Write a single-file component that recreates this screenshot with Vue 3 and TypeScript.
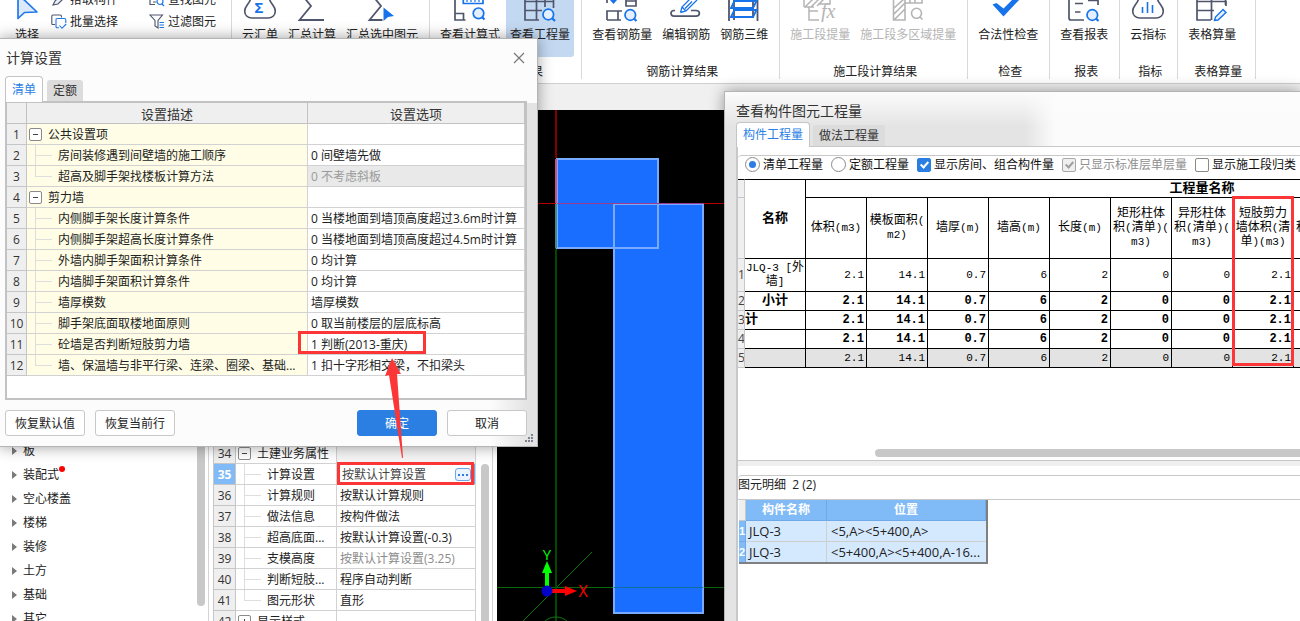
<script setup lang="ts">
import { ref } from 'vue'

interface SettingRow { no: number; name: string; value: string; group?: boolean; last?: boolean; disabled?: boolean }
interface PropertyRow { no: number; name: string; value: string; group?: boolean; last?: boolean; muted?: boolean; open?: boolean }

const settings: SettingRow[] = [
  { no: 1, name: '公共设置项', value: '', group: true },
  { no: 2, name: '房间装修遇到间壁墙的施工顺序', value: '0 间壁墙先做' },
  { no: 3, name: '超高及脚手架找楼板计算方法', value: '0 不考虑斜板', last: true, disabled: true },
  { no: 4, name: '剪力墙', value: '', group: true },
  { no: 5, name: '内侧脚手架长度计算条件', value: '0 当楼地面到墙顶高度超过3.6m时计算' },
  { no: 6, name: '内侧脚手架超高长度计算条件', value: '0 当楼地面到墙顶高度超过4.5m时计算' },
  { no: 7, name: '外墙内脚手架面积计算条件', value: '0 均计算' },
  { no: 8, name: '内墙脚手架面积计算条件', value: '0 均计算' },
  { no: 9, name: '墙厚模数', value: '墙厚模数' },
  { no: 10, name: '脚手架底面取楼地面原则', value: '0 取当前楼层的层底标高' },
  { no: 11, name: '砼墙是否判断短肢剪力墙', value: '1 判断(2013-重庆)' },
  { no: 12, name: '墙、保温墙与非平行梁、连梁、圈梁、基础...', value: '1 扣十字形相交梁，不扣梁头', last: true },
]

const properties: PropertyRow[] = [
  { no: 34, name: '土建业务属性', value: '', group: true, open: true },
  { no: 35, name: '计算设置', value: '按默认计算设置' },
  { no: 36, name: '计算规则', value: '按默认计算规则' },
  { no: 37, name: '做法信息', value: '按构件做法' },
  { no: 38, name: '超高底面...', value: '按默认计算设置(-0.3)' },
  { no: 39, name: '支模高度', value: '按默认计算设置(3.25)', muted: true },
  { no: 40, name: '判断短肢...', value: '程序自动判断' },
  { no: 41, name: '图元形状', value: '直形', last: true },
  { no: 42, name: '显示样式', value: '', group: true },
]
const selectedProperty = ref(35)
const editedValue = ref('按默认计算设置')

const categories = ['板', '装配式', '空心楼盖', '楼梯', '装修', '土方', '基础', '其它']

const quantityColumns: string[][] = [
  ['体积(m3)'],
  ['模板面积(', 'm2)'],
  ['墙厚(m)'],
  ['墙高(m)'],
  ['长度(m)'],
  ['矩形柱体', '积(清单)(', 'm3)'],
  ['异形柱体', '积(清单)(', 'm3)'],
  ['短肢剪力', '墙体积(清', '单)(m3)'],
  ['圆形柱体', '积(清单)(', 'm3)'],
  [], [], [], [],
]
const amounts = ['2.1', '14.1', '0.7', '6', '2', '0', '0', '2.1', '', '', '', '', '']
const quantityRows = [
  { no: 1, name: ['JLQ-3 [外', '墙]'], kind: 'item' },
  { no: 2, name: ['小计'], kind: 'sum' },
  { no: 3, name: ['计'], kind: 'sum start' },
  { no: 4, name: [], kind: 'sum' },
  { no: 5, name: [], kind: 'total' },
]
const parts = (line: string): string[] => line.match(/[\x00-\x7f]+|[^\x00-\x7f]+/g) ?? []
const isLatin = (part: string): boolean => part.charCodeAt(0) < 128

const quota = ref('list')
const showRooms = ref(true)
const standardOnly = ref(true)
const showSections = ref(false)

const elements = [
  { no: 1, name: 'JLQ-3', place: '<5,A><5+400,A>' },
  { no: 2, name: 'JLQ-3', place: '<5+400,A><5+400,A-16...' },
]
</script>

<template>
  <div class="app">
    <header class="ribbon">
      <section class="group first">
        <div class="tools">
          <button class="tool">
            <svg class="ico" width="40" height="22" viewBox="0 0 40 22"><path d="M11 -6 V18.5 L17.5 12.5 L30 12 Z" fill="#dbe9fb" stroke="#2178e8" stroke-width="1.7" stroke-linejoin="round" /></svg>
            <span>选择</span>
          </button>
          <div class="stack">
            <button class="mini">
              <svg width="16" height="16" viewBox="0 0 16 16"><path d="M2 13 L4 9 L11 2 L14 5 L7 12 Z" fill="#e8f2ff" stroke="#4f566b" stroke-width="1.2" /></svg>
              拾取构件
            </button>
            <button class="mini">
              <svg width="16" height="16" viewBox="0 0 16 16" fill="none" stroke="#4f566b" stroke-width="1.1"><path d="M4 10.5 H1.5 Q.8 10.5 .8 9.5 V2 Q.8 1 2 1 H9 Q10.5 1 10.5 2.5 V3.5" /><g stroke="#2178e8"><path d="M8 13.8 H6 Q5 13.8 5 12.5 V5.5 Q5 4.5 6 4.5 H13.5 Q14.8 4.5 14.8 6 V9" /><path d="M8.5 11.5 L11 14.3 L15.2 10" /></g></svg>
              批量选择
            </button>
          </div>
          <div class="stack">
            <button class="mini">
              <svg width="16" height="16" viewBox="0 0 16 16" fill="none" stroke="#4f566b" stroke-width="1.2"><path d="M1 1 V12.5 H6 M4 10 H7 M1 3 H6" /><circle cx="11" cy="9.5" r="3" stroke="#2178e8" /><path d="M13 12 L15 14" stroke="#2178e8" /></svg>
              查找图元
            </button>
            <button class="mini">
              <svg width="16" height="16" viewBox="0 0 16 16" fill="none" stroke="#4f566b" stroke-width="1.1"><path d="M1 1 H13.5 L9 6.5 V14 L6 12 V6.5 Z" /><path d="M10.5 8.5 H15 M10.5 11 H15 M10.5 13.5 H15" stroke="#2178e8" /></svg>
              过滤图元
            </button>
          </div>
        </div>
      </section>
      <section class="group">
        <div class="tools">
          <button class="tool">
            <svg class="ico" width="40" height="22" viewBox="0 0 40 22"><path d="M10.5 -1 C9.5 4 4.7 6 4.7 11 C4.7 15.5 8 18 12 18 H28 C32 18 35.3 15.5 35.3 11 C35.3 6 30.5 4 29.5 -1" fill="none" stroke="#4f566b" stroke-width="1.7" /><text x="19" y="12.5" text-anchor="middle" font-size="15" font-weight="700" fill="#1673ea">Σ</text></svg>
            <span>云汇单</span>
          </button>
          <button class="tool">
            <svg class="ico" width="40" height="22" viewBox="0 0 40 22"><path d="M12.5 -2 L19 6 L7.5 20 H32" fill="none" stroke="#4f566b" stroke-width="1.8" /></svg>
            <span>汇总计算</span>
          </button>
          <button class="tool">
            <svg class="ico" width="40" height="22" viewBox="0 0 40 22"><path d="M12.5 -2 L19 6 L7.5 20 H20.5" fill="none" stroke="#4f566b" stroke-width="1.8" /><path d="M21.5 7.5 V21 L26 17 L32 16 Z" fill="#1673ea" /></svg>
            <span>汇总选中图元</span>
          </button>
        </div>
      </section>
      <section class="group">
        <div class="tools">
          <button class="tool">
            <svg class="ico" width="40" height="22" viewBox="0 0 40 22" fill="none" stroke="#4f566b" stroke-width="1.7"><path d="M5 -1 V20 H15.5 M5 13.5 H13.5 V20" /><g stroke="#1673ea"><path d="M13.3 -1 V3.5 H33 V-1" /><path d="M17 0 V2 M21 0 V2 M25 0 V2 M29 0 V2" stroke-width="1.2" /><circle cx="28.5" cy="13.3" r="5.3" fill="#e4efff" /><path d="M32 17 L34.5 19.5" stroke-width="2.2" /></g></svg>
            <span>查看计算式</span>
          </button>
          <button class="tool selected">
            <svg class="ico" width="40" height="22" viewBox="0 0 40 22" fill="none" stroke="#4f566b" stroke-width="1.7"><path d="M5 -1 V20 H19 M5 1.5 H34 M5 10.5 H22 M16.5 -1 V20 M25 -1 V7 M33.5 -1 V8" /><g stroke="#1673ea"><circle cx="28.3" cy="14.5" r="5.3" fill="#e4efff" /><path d="M32 18 L35 21" stroke-width="2.2" /></g></svg>
            <span>查看工程量</span>
          </button>
        </div>
        <span class="caption">土建计算结果</span>
      </section>
      <section class="group">
        <div class="tools">
          <button class="tool">
            <svg class="ico" width="40" height="22" viewBox="0 0 40 22" fill="none" stroke="#4f566b" stroke-width="1.7"><path d="M5 -1 V3 M5 20 V11 H20 M5 20 H19 M16 11 V20 M24 -1 V6 H34 V-1 M24 1 H34" /><path d="M8 0 L11.5 4 L15 0 Z" fill="#1673ea" stroke="none" /><g stroke="#1673ea"><circle cx="28.3" cy="15" r="5.3" fill="#e4efff" /><path d="M32 18.5 L34.5 21" stroke-width="2.2" /></g></svg>
            <span>查看钢筋量</span>
          </button>
          <button class="tool">
            <svg class="ico" width="40" height="22" viewBox="0 0 40 22" fill="none" stroke="#4f566b" stroke-width="1.7"><path d="M9 10.5 H8 C4 10.5 4 16.2 8 16.2 H30 C34.5 16.2 34.5 10.5 30 10.5 H25" /><path d="M14.5 12.5 L16 7 L24 -1 M14.5 12.5 L20 11 L31 0 M19 8.5 L26 1.5 M16 7 L20 11" stroke="#1673ea" stroke-width="1.3" /></svg>
            <span>编辑钢筋</span>
          </button>
          <button class="tool">
            <svg class="ico" width="40" height="22" viewBox="0 0 40 22" fill="none" stroke="#4f566b" stroke-width="1.8"><path d="M5 -1 V21 M33.5 -1 V21 M10 -1 V20 M29 -1 V18" /><path d="M7 8 L10.5 1 H32.5 L29 8 Z M7 17 L10.5 10 H32.5 L29 17 Z" stroke="#1673ea" /></svg>
            <span>钢筋三维</span>
          </button>
        </div>
        <span class="caption">钢筋计算结果</span>
      </section>
      <section class="group">
        <div class="tools">
          <button class="tool" disabled>
            <svg class="ico" width="40" height="22" viewBox="0 0 40 22" fill="none" stroke="#b5b5b5" stroke-width="1.5"><path d="M4 7 H14 M9 7 V20 H19 M9 11 H18 M4 7 V-1 M5 7 L13 -1 M11 7 L19 -1 M17 6 L24 -1 M18 4 H30 V-1" /><text x="21" y="18" font-size="20" font-style="italic" fill="#b5b5b5" stroke="none" class="fx">fx</text></svg>
            <span>施工段提量</span>
          </button>
          <button class="tool" disabled>
            <svg class="ico" width="40" height="22" viewBox="0 0 40 22" fill="none" stroke="#b5b5b5" stroke-width="1.6"><path d="M5.5 -1 V20 H17 V-1 M6 8 L16 -1 M6 14 L17 3 M6 20 L17 9 M17 3 H34 V-1 M22 -1 V3 M27 -1 V3" /><circle cx="28.5" cy="13.3" r="5" /><path d="M32 17 L34.5 19.5" /></svg>
            <span>施工段多区域提量</span>
          </button>
        </div>
        <span class="caption">施工段计算结果</span>
      </section>
      <section class="group">
        <div class="tools">
          <button class="tool">
            <svg class="ico" width="40" height="22" viewBox="0 0 40 22"><path d="M4.5 4.5 L8.5 3 L15.5 8.5 L25 -1 H32 L15.5 16.5 Z" fill="#1673ea" /></svg>
            <span>合法性检查</span>
          </button>
        </div>
        <span class="caption">检查</span>
      </section>
      <section class="group">
        <div class="tools">
          <button class="tool">
            <svg class="ico" width="40" height="22" viewBox="0 0 40 22" fill="none" stroke="#4f566b" stroke-width="1.7"><path d="M5 -1 V18 Q5 20 7 20 H20 M11 3.5 H19 M11 12 H16.5 M24 .5 H34 V5" /><g stroke="#1673ea"><circle cx="28.3" cy="15" r="5.3" fill="#e4efff" /><path d="M32 18.5 L34.5 21" stroke-width="2.2" /></g></svg>
            <span>查看报表</span>
          </button>
        </div>
        <span class="caption">报表</span>
      </section>
      <section class="group">
        <div class="tools">
          <button class="tool">
            <svg class="ico" width="40" height="22" viewBox="0 0 40 22"><path d="M10.5 -1 C9.5 4 4.7 6 4.7 11 C4.7 15.5 8 18 12 18 H28 C32 18 35.3 15.5 35.3 11 C35.3 6 30.5 4 29.5 -1" fill="none" stroke="#4f566b" stroke-width="1.7" /><path d="M14.5 7 V13 M19.5 2 V13 M24.5 5 V13" stroke="#1673ea" stroke-width="1.6" /></svg>
            <span>云指标</span>
          </button>
        </div>
        <span class="caption">指标</span>
      </section>
      <section class="group last">
        <div class="tools">
          <button class="tool">
            <svg class="ico" width="40" height="22" viewBox="0 0 40 22" fill="none" stroke="#4f566b" stroke-width="1.7"><path d="M5 -1 V20 H19 M5 1.5 H34 V6 M5 10.5 H22 M19.5 -1 V20 M33.5 -1 V5" /><path d="M22.5 20.5 L23.5 17 L31 9.5 L34 12.5 L26 20 Z" fill="#e4efff" stroke="#1673ea" stroke-width="1.4" /></svg>
            <span>表格算量</span>
          </button>
        </div>
        <span class="caption">表格算量</span>
      </section>
    </header>
    <div class="strip"></div>

    <main class="body">
      <nav class="tree">
        <ul>
          <li v-for="item in categories" :key="item">
            <a href="#"><svg width="5" height="8" viewBox="0 0 5 8"><path d="M0 0 L5 4 L0 8 Z" fill="#7a7a7a" /></svg><span class="cat">{{ item }}<i v-if="item === '装配式'" class="dot"></i></span></a>
          </li>
        </ul>
        <div class="thumb"></div>
      </nav>

      <section class="props">
        <div class="pbox">
          <table class="grid ptable">
            <colgroup><col class="c-no" /><col class="c-name" /><col /></colgroup>
            <tbody>
              <tr v-for="row in properties" :key="row.no" :class="{ active: row.no === selectedProperty, muted: row.muted, open: row.open }">
                <th scope="row">{{ row.no }}</th>
                <td class="tname" :class="{ kid: !row.group, last: row.last }">
                  <button v-if="row.group" class="toggle" :class="{ closed: !row.open }" :aria-label="row.name"></button>{{ row.name }}
                </td>
                <td class="tval">
                  <div v-if="row.no === selectedProperty" class="editor">
                    <input v-model="editedValue" type="text" :aria-label="row.name" />
                    <button class="more" aria-label="更多"><i></i><i></i><i></i></button>
                  </div>
                  <template v-else>{{ row.value }}</template>
                </td>
              </tr>
            </tbody>
          </table>
        </div>
        <div class="thumb"></div>
      </section>

      <section class="canvas">
        <svg width="803" height="511" viewBox="497 110 803 511" fill="none">
          <path d="M497 587.5 H1300" stroke="#076a07" />
          <path d="M592 552 L520 624" stroke="#0a780a" />
          <path d="M556 110 V158" stroke="#800000" stroke-width="2" />
          <path d="M556 248 V621" stroke="#004800" stroke-width="2" />
          <circle cx="556" cy="634" r="17" stroke="#0a780a" />
          <rect x="557" y="159" width="101" height="89" fill="#196eff" stroke="#78aaff" stroke-width="2" />
          <rect x="614" y="204" width="89" height="409" fill="#196eff" stroke="#78aaff" stroke-width="2" />
          <path d="M614 248 H658 V204" stroke="#78aaff" stroke-width="2" />
          <path d="M556 159 V203" stroke="#c8507c" stroke-width="2" />
          <path d="M556 204 V248" stroke="#3c8c8c" stroke-width="2" />
          <path d="M537 203.5 H556 M704 203.5 H1300" stroke="#c00000" />
          <path d="M557 203.5 H704" stroke="#9c3c8c" />
          <path d="M614 587.5 H703" stroke="#0f6f9c" />
          <path d="M547 588 V572" stroke="#0f0" stroke-width="4" />
          <path d="M542 573 L547 561 L552 573 Z" fill="#0f0" />
          <path d="M552 591 H566" stroke="#f00" stroke-width="4" />
          <path d="M565 586 L577 591 L565 596 Z" fill="#f00" />
          <circle cx="547" cy="591" r="5.5" fill="#0000c8" />
          <text x="547" y="560" text-anchor="middle" font-size="15" fill="#0f0">Y</text>
          <text x="583" y="597" text-anchor="middle" font-size="16" fill="#f00">X</text>
        </svg>
      </section>
    </main>

    <section class="win quantities" role="dialog" aria-label="查看构件图元工程量">
      <h2>查看构件图元工程量</h2>
      <div class="tabs">
        <button class="tab on">构件工程量</button>
        <button class="tab">做法工程量</button>
      </div>
      <div class="pane">
        <div class="upper">
          <div class="options">
            <label><input v-model="quota" type="radio" name="quota" value="list" />清单工程量</label>
            <label><input v-model="quota" type="radio" name="quota" value="norm" />定额工程量</label>
            <label><input v-model="showRooms" type="checkbox" />显示房间、组合构件量</label>
            <label class="off"><input v-model="standardOnly" type="checkbox" disabled />只显示标准层单层量</label>
            <label><input v-model="showSections" type="checkbox" />显示施工段归类</label>
          </div>
          <table class="qtable">
            <colgroup><col class="q-no" /><col v-for="n in 14" :key="n" class="q-col" /></colgroup>
            <thead>
              <tr class="h1"><td class="no"></td><th rowspan="2" class="strong">名称</th><th colspan="13" class="strong">工程量名称</th></tr>
              <tr class="h2">
                <td class="no"></td>
                <th v-for="(lines, i) in quantityColumns" :key="i">
                  <div v-for="line in lines" :key="line" class="ln"><span v-for="(p, k) in parts(line)" :key="k" :class="{ latin: isLatin(p) }">{{ p }}</span></div>
                </th>
              </tr>
            </thead>
            <tbody>
              <tr v-for="row in quantityRows" :key="row.no" :class="row.kind">
                <td class="no">{{ row.no }}</td>
                <td class="qname"><div v-for="line in row.name" :key="line" class="ln"><span v-for="(p, k) in parts(line)" :key="k" :class="{ latin: isLatin(p) }">{{ p }}</span></div></td>
                <td v-for="(amount, i) in amounts" :key="i" class="num">{{ amount }}</td>
              </tr>
            </tbody>
          </table>
          <div class="hthumb"></div>
        </div>
        <div class="split"></div>
        <div class="lower">
          <h3>图元明细&nbsp; 2 (2)</h3>
          <table class="etable">
            <colgroup><col class="q-no" /><col class="e-name" /><col class="e-place" /></colgroup>
            <thead><tr><td class="blank"></td><th>构件名称</th><th>位置</th></tr></thead>
            <tbody>
              <tr v-for="el in elements" :key="el.no"><th scope="row">{{ el.no }}</th><td>{{ el.name }}</td><td class="place">{{ el.place }}</td></tr>
            </tbody>
          </table>
        </div>
      </div>
    </section>

    <section class="win settings" role="dialog" aria-label="计算设置">
      <div class="bar">
        <h2>计算设置</h2>
        <button class="close" aria-label="关闭"><svg width="12" height="12" viewBox="0 0 12 12"><path d="M1 1 L11 11 M11 1 L1 11" stroke="#777" stroke-width="1.2" /></svg></button>
      </div>
      <div class="tabs">
        <button class="tab on">清单</button>
        <button class="tab">定额</button>
      </div>
      <div class="frame">
        <table class="grid stable">
          <colgroup><col class="s-no" /><col class="s-name" /><col /></colgroup>
          <thead><tr><th></th><th>设置描述</th><th>设置选项</th></tr></thead>
          <tbody>
            <tr v-for="row in settings" :key="row.no" :class="{ disabled: row.disabled }">
              <th scope="row">{{ row.no }}</th>
              <td class="tname" :class="{ kid: !row.group, last: row.last }"><button v-if="row.group" class="toggle" :aria-label="row.name"></button>{{ row.name }}</td>
              <td class="tval">{{ row.value }}</td>
            </tr>
          </tbody>
        </table>
      </div>
      <footer>
        <button class="btn">恢复默认值</button>
        <button class="btn">恢复当前行</button>
        <span class="fill"></span>
        <button class="btn primary">确定</button>
        <button class="btn">取消</button>
      </footer>
      <svg class="grip" width="9" height="9" viewBox="0 0 9 9" fill="#7c8290"><path d="M6 0h2v2h-2z M3 3h2v2h-2z M6 3h2v2h-2z M0 6h2v2h-2z M3 6h2v2h-2z M6 6h2v2h-2z" /></svg>
    </section>

    <svg class="marks" width="1300" height="621" viewBox="0 0 1300 621" fill="none">
      <g stroke="#fc3636" stroke-width="3">
        <rect x="299.5" y="332.5" width="125" height="20" />
        <rect x="338.5" y="463.5" width="134" height="20" />
        <rect x="1233.5" y="197.5" width="59" height="167" />
      </g>
      <path d="M392 358 L401 374 L397 374 L403 458 L402 458 L389 375 L385 376 Z" fill="#fc3636" />
    </svg>
  </div>
</template>

<style>
body { margin: 0; }
</style>

<style scoped>
.app { position: relative; display: flex; flex-direction: column; height: 100vh; overflow: hidden; background: #fff; color: #222; font: 12px/18px "Open Sans", "Noto Sans CJK SC", sans-serif; }
.app *, .app *::before, .app *::after { box-sizing: border-box; }
button, input { font: inherit; color: inherit; margin: 0; }
button { border: 0; padding: 0; background: none; white-space: nowrap; }
h2, h3, ul { margin: 0; padding: 0; font-weight: 400; list-style: none; }
table { border-collapse: separate; border-spacing: 0; table-layout: fixed; }
td, th { padding: 0; font-weight: 400; white-space: nowrap; overflow: hidden; }

.ribbon { flex: none; display: flex; height: 84px; overflow: hidden; border-bottom: 1px solid #cfcfcf; background: #fff; }
.group { flex: none; display: flex; flex-direction: column; height: 79px; padding: 0 11px 0 10px; border-right: 1px solid #d9d9d9; }
.group.first { padding: 0 15px; }
.group.last { padding-right: 19px; }
.tools { display: flex; gap: 10px; height: 57px; }
.first .tools { gap: 0; }
.tool { display: flex; flex-direction: column; align-items: center; height: 57px; line-height: 16px; }
.tool .ico { flex: none; margin: 0 -8px 5px; overflow: hidden; }
.tool.selected { margin: 0 -4px; padding: 0 4px; border-radius: 0 0 3px 3px; background: #c3d9f2; }
.tool:disabled { color: #b4b4b4; }
.fx { font-family: "Liberation Serif", serif; }
.stack { display: flex; flex-direction: column; margin: -11px 0 0 12px; }
.stack + .stack { margin-left: 31px; }
.mini { display: flex; align-items: center; gap: 3px; height: 22px; }
.caption { margin: 7px 0 0; padding-left: 4px; line-height: 16px; text-align: center; white-space: nowrap; }
.last .caption { margin-right: -8px; }
.strip { flex: none; height: 26px; background: #f0f0f0; }

.body { flex: 1; display: flex; min-height: 0; overflow: hidden; }
.tree { flex: 0 0 209px; display: flex; padding-top: 329px; border-right: 1px solid #d4d4d4; overflow: hidden; }
.tree ul { flex: 1; }
.tree a { display: flex; align-items: center; gap: 6px; height: 24px; padding-left: 12px; color: #222; text-decoration: none; }
.cat { position: relative; }
.dot { position: absolute; right: -6px; top: 0; width: 6px; height: 6px; border-radius: 50%; background: #f00; }
.thumb { flex: none; width: 8px; border-radius: 4px; background: #c8c8c8; }
.tree .thumb { height: 167px; margin-right: 3px; }
.props { flex: 0 0 284px; display: flex; padding: 333px 3px 0 4px; margin-right: 4px; border-right: 1px solid #d4d4d4; overflow: hidden; }
.pbox { flex: 1; min-width: 0; }
.props .thumb { height: 200px; margin: 21px 0 0 5px; }
.canvas { flex: 1; min-width: 0; overflow: hidden; background: #000; }
.canvas svg { display: block; }

.grid th, .grid td { height: 21px; padding-top: 2px; border-right: 1px solid #d2d2d2; border-bottom: 1px solid #d2d2d2; line-height: 18px; text-align: left; }
.grid tbody th { background: #efefef; text-align: center; border-color: #c6c6c8; color: #333; }
.ptable { width: 100%; border-left: 1px solid #c8c8c8; }
.c-no { width: 22px; }
.c-name { width: 101px; }
.ptable .open .tval { background: #f5f5f5; }
.tname { position: relative; }
.grid .tname { padding-left: 21px; }
.grid .tname.kid { padding-left: 31px; }
.tname.kid::before { content: ""; position: absolute; left: 8px; top: 0; width: 1px; height: 21px; background: #dedede; }
.tname.last::before { height: 10px; }
.tname.kid::after { content: ""; position: absolute; left: 8px; top: 10px; width: 17px; height: 1px; background: #dedede; }
.toggle { position: absolute; left: 2px; top: 4px; width: 13px; height: 13px; border: 1px solid #8a8a8a; border-radius: 2px; background: #fff; }
.toggle::before { content: ""; position: absolute; left: 3px; top: 5px; width: 5px; height: 1px; background: #444; }
.toggle.closed::after { content: ""; position: absolute; left: 5px; top: 3px; width: 1px; height: 5px; background: #444; }
.grid .tval { padding-left: 3px; }
.ptable .muted .tval { color: #8c8c8c; }
.ptable .active th { background: #80bbf8; color: #fff; font-weight: 700; }
.ptable .active .tval { padding: 0; }
.editor { display: flex; align-items: center; height: 20px; border: 1px solid #6aa7ea; padding: 1px 3px 0 4px; }
.editor input { flex: 1; min-width: 0; height: 17px; padding: 0; border: 0; outline: 0; background: none; color: #444; }
.more { display: flex; align-items: center; justify-content: center; gap: 2px; width: 16px; height: 13px; border: 1px solid #6aa7ea; border-radius: 3px; background: #eaf3ff; }
.more i { width: 2px; height: 2px; background: #2f7de0; }

.win { position: absolute; display: flex; flex-direction: column; border: 1px solid #b4b4b4; box-shadow: 0 0 14px rgba(0, 0, 0, .38); }
.win h2 { font-size: 14px; line-height: 20px; color: #333; }
.tabs { display: flex; align-items: flex-end; gap: 4px; height: 25px; }
.tab { height: 21px; padding: 0 6px; border-radius: 3px 3px 0 0; background: #dcdcdc; color: #333; }
.tab.on { height: 26px; margin-bottom: -1px; border: 1px solid #c4c4c6; border-bottom: 0; border-radius: 4px 4px 0 0; background: #fff; color: #2a80e6; z-index: 1; }

.settings { left: -1px; top: 38px; width: 539px; padding: 0 10px 0 5px; background: linear-gradient(90deg, transparent 490px, #e3e3e3 528px) 0 64px no-repeat, #fcfcfc; }
.bar { display: flex; align-items: center; justify-content: space-between; height: 37px; padding-left: 1px; }
.close { display: flex; margin-right: 2px; }
.frame { border: 2px solid #c2c2c5; padding-bottom: 22px; background: #fff; }
.stable { width: 100%; }
.s-no { width: 20px; }
.s-name { width: 281px; }
.grid thead th { background: #efefef; font-size: 13px; text-align: center; border-color: #c2c2c5; color: #333; }
.stable .tname { background: #fffde6; }
.stable .disabled .tval { background: #e9e9e9; color: #9a9a9a; }
footer { display: flex; gap: 10px; padding: 10px 0; }
.fill { flex: 1; }
.btn { width: 80px; height: 26px; padding-top: 1px; border: 1px solid #c8c8c8; border-radius: 3px; background: #fff; }
.btn.primary { border-color: #2b7fe3; background: #2b7fe3; color: #fff; }
.grip { position: absolute; right: 3px; bottom: 3px; }

.quantities { left: 724px; right: 0; top: 91px; bottom: 0; padding-left: 11px; border-right: 0; border-bottom: 0; overflow: hidden; background: linear-gradient(#fcfcfc, transparent 34px), linear-gradient(90deg, #e4e4e4 300px, #fbfbfb 330px); }
.quantities h2 { height: 29px; padding-top: 9px; }
.quantities .tab.on { height: 25px; margin-right: -1px; }
.pane { flex: 1; display: flex; flex-direction: column; min-height: 0; border: solid #c6c8cc; border-width: 1px 0 0 2px; padding-top: 8px; background: #fff; }
.upper { flex: 1; display: flex; flex-direction: column; min-height: 0; border: solid #c8c8c8; border-width: 1px 0; overflow: hidden; border-radius: 4px 0 0 0; }
.options { flex: none; display: flex; gap: 8px; height: 23px; padding: 0 0 6px 7px; color: #111; }
.options label { flex: none; display: flex; align-items: center; gap: 3px; white-space: nowrap; }
.options .off { color: #8f8f8f; }
.options input { appearance: none; position: relative; flex: none; width: 14px; height: 14px; border: 1px solid #8a8a8a; border-radius: 2px; background: #fff; }
.options input[type="radio"] { width: 15px; height: 15px; border-radius: 50%; }
.options input[type="radio"]:checked::before { content: ""; position: absolute; left: 3px; top: 3px; width: 7px; height: 7px; border-radius: 50%; background: #2b7fe3; }
.options input[type="checkbox"]:checked { border-color: #2b7fe3; background: #2b7fe3; }
.options input[type="checkbox"]:checked::before { content: ""; position: absolute; left: 4px; top: 1px; width: 5px; height: 8px; border: solid #fff; border-width: 0 2px 2px 0; transform: rotate(42deg); }
.options input[type="checkbox"]:disabled { border-color: #a8a8a8; background: #efefef; }
.options input[type="checkbox"]:disabled::before { border-color: #a0a0a0; }

.qtable { flex: none; width: 861px; color: #000; font-family: "Liberation Mono", "Noto Sans CJK SC", monospace; }
.q-no { width: 7px; }
.q-col { width: 61px; }
.qtable th, .qtable td { border-right: 1px solid #000; border-bottom: 1px solid #000; line-height: 14px; }
.qtable .h1 th, .qtable .h1 td { border-top: 1px solid #000; }
.qtable .h1 td { height: 19px; }
.qtable .h2 td { height: 61px; }
.qtable .strong { font-size: 13px; font-weight: 700; }
.ln { height: 14px; }
.latin { font-size: 11px; }
.qtable td.no { border-color: #c6c6c8; background: #efefef; color: #444; font: 12px/16px "Open Sans", sans-serif; text-align: center; text-overflow: clip; }
.qtable .h1 td.no { border-top-color: #000; }
.qtable tbody td { height: 19px; }
.qtable .item td { height: 33px; }
.qtable .qname { text-align: center; }
.qtable .num { padding-right: 2px; font-size: 11px; text-align: right; }
.qtable .sum .qname { font-size: 13px; font-weight: 700; }
.qtable .sum .num { font-size: 12px; font-weight: 700; }
.qtable .start .qname { text-align: left; }
.qtable .total .qname, .qtable .total .num { background: #e3e3e3; }
.hthumb { flex: none; height: 8px; margin: auto 0 3px 137px; border-radius: 4px 0 0 4px; background: #c8c8c8; }
.split { flex: none; height: 14px; border: solid #fff; border-width: 0 0 9px; background: #efefef; }
.lower { flex: 0 0 146px; border-top: 1px solid #c8c8c8; border-radius: 4px 0 0 0; }
.lower h3 { height: 24px; border-bottom: 1px solid #c8c8c8; font-size: 12px; line-height: 18px; }
.etable { width: 249px; margin-left: 1px; border-right: 2px solid #808080; border-bottom: 2px solid #808080; }
.e-name { width: 81px; }
.etable th, .etable td { height: 21px; border: solid #6fa9e8; border-width: 0 1px 1px 0; }
.etable th { background: #80bbf8; color: #fff; font-weight: 700; text-align: center; }
.etable tbody th { font: 700 11px/16px "Liberation Sans", sans-serif; overflow: visible; }
.etable .blank { background: #efefef; border-color: #c8c8c8; }
.etable tbody td { padding-left: 3px; background: #d5e9fe; border-color: #cfcfcf; font-size: 13px; }
.etable tbody .place { padding-left: 4px; border-right: 0; }
.etable tbody tr:last-child td, .etable tbody tr:last-child th { height: 20px; border-bottom: 0; }
.marks { position: absolute; left: 0; top: 0; pointer-events: none; }
</style>
